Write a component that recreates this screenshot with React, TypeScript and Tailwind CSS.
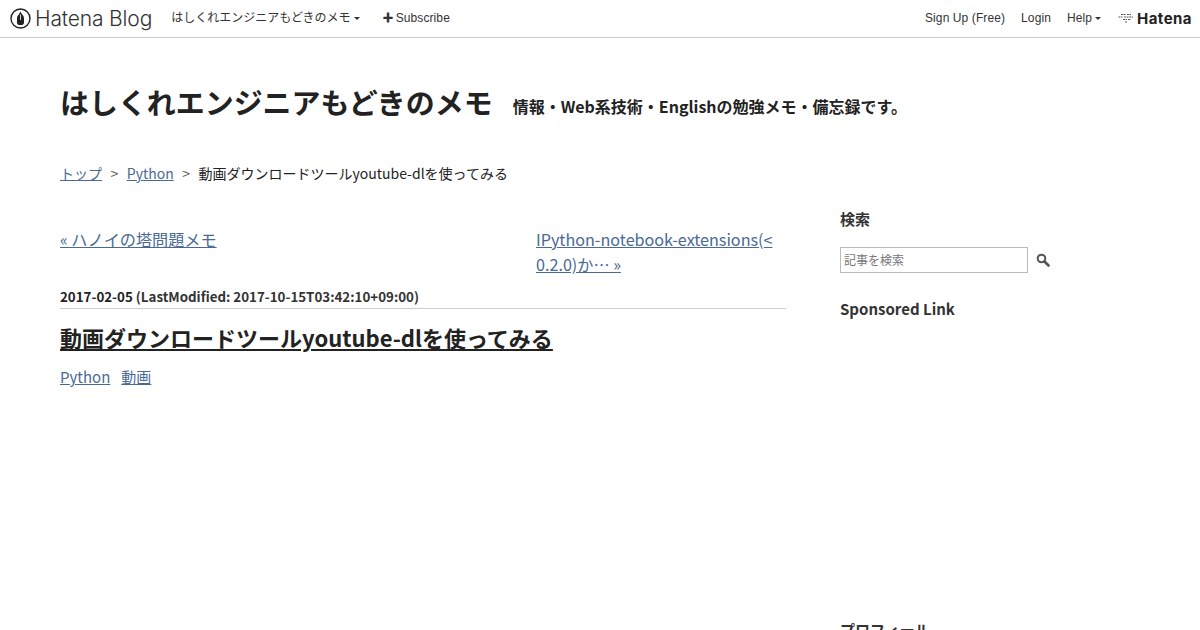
const jp = "font-['Noto_Sans_CJK_JP','Noto_Sans',sans-serif]";

function Caret() {
  return <span className="ml-[3px] inline-block h-0 w-0 border-x-[3px] border-t-[3px] border-x-transparent border-t-[#333] align-middle" />;
}

function BlogLogo() {
  return (
    <div className="flex items-center gap-[4px]">
      <svg width="21" height="21" viewBox="0 0 21 21">
        <circle cx="10.5" cy="10.5" r="9.5" fill="none" stroke="#222" strokeWidth="1.4" />
        <path d="M10.5 3.6 L12.2 6.6 C13.6 8 14 9 14 11 L14 14.4 C14 15.8 13.2 16.8 12 17 L9 17 C7.8 16.8 7 15.8 7 14.4 L7 11 C7 9 7.4 8 8.8 6.6 Z" fill="#222" />
        <path d="M10.5 6.5 V12" stroke="#fff" strokeWidth="0.8" />
      </svg>
      <span className="font-['Inter',sans-serif] text-[21px] leading-none font-light tracking-[-0.15px] text-[#333]">Hatena Blog</span>
    </div>
  );
}

function HatenaLogo() {
  return (
    <div className="flex items-center gap-[3px]">
      <svg width="16" height="12" viewBox="0 0 16 12">
        <path d="M3 2.5h5M9 2.5h4M0.5 5h4M6 5h9M5 7.5h4M10 7.5h3M7 10h2" stroke="#555" strokeWidth="1" fill="none" strokeDasharray="2 0.6" />
      </svg>
      <span className="font-['Inter',sans-serif] text-[15px] leading-none font-bold tracking-[0.45px] text-[#222]">Hatena</span>
    </div>
  );
}

function TopBar() {
  return (
    <div className="flex h-[38px] items-center justify-between border-b border-[#ccc] bg-white pr-[8px] pb-[1px] pl-[10px] font-['Liberation_Sans','Noto_Sans_CJK_JP',sans-serif] text-[12px] tracking-[0.1px] text-[#333]">
      <div className="flex items-center">
        <BlogLogo />
        <div className="ml-[19px] flex items-center tracking-normal">
          はしくれエンジニアもどきのメモ
          <Caret />
        </div>
        <div className="ml-[23px] flex items-center">
          <span className="mr-[2px] text-[11px] leading-none font-bold">✚</span>
          Subscribe
        </div>
      </div>
      <div className="flex items-center">
        <span>Sign Up (Free)</span>
        <span className="ml-[16px]">Login</span>
        <span className="ml-[16px] flex items-center">
          Help
          <Caret />
        </span>
        <div className="ml-[17px]">
          <HatenaLogo />
        </div>
      </div>
    </div>
  );
}

export default function App() {
  const link = "text-[#4a6a94] underline";
  return (
    <div className={`h-[630px] overflow-hidden bg-white text-[#222] ${jp}`}>
      <TopBar />
      <div className="px-[60px]">
        <div className="flex items-baseline pt-[40px]">
          <h1 className="text-[28.95px] leading-[46px] font-bold">はしくれエンジニアもどきのメモ</h1>
          <p className="ml-[20px] -translate-y-px text-[16px] font-semibold">情報・Web系技術・Englishの勉強メモ・備忘録です。</p>
        </div>
        <div className="mt-[37px] flex items-center text-[14px] leading-[24px]">
          <a className={link}>トップ</a>
          <span className="mx-[8.5px] text-[#555]">&gt;</span>
          <a className={link}>Python</a>
          <span className="mx-[8.5px] text-[#555]">&gt;</span>
          <span>動画ダウンロードツールyoutube-dlを使ってみる</span>
        </div>
        <div className="mt-[21px] flex">
          <div className="w-[726px]">
            <div className="mt-[21px] flex justify-between text-[16.15px] leading-[25px]">
              <a className={`${link} h-fit`}>« ハノイの塔問題メモ</a>
              <a className={`${link} w-[250px]`}>
                IPython-notebook-extensions(&lt;
                <br />
                0.2.0)か… »
              </a>
            </div>
            <div className="mt-[9px] border-b border-[#ccc] text-[13.33px] leading-[22px] font-bold">
              2017-02-05 <span className="font-semibold text-[#333]">(LastModified: 2017-10-15T03:42:10+09:00)</span>
            </div>
            <h2 className="mt-[11px] text-[22px] leading-[35px] font-bold underline">
              動画ダウンロードツールyoutube-dlを使ってみる
            </h2>
            <div className="mt-[9px] flex gap-[11px] text-[15px] leading-[25.6px]">
              <a className={link}>Python</a>
              <a className={link}>動画</a>
            </div>
          </div>
          <div className="ml-[54px] w-[260px]">
            <h3 className="text-[15px] leading-[26px] font-bold text-[#333]">検索</h3>
            <div className="mt-[15px] flex items-center">
              <input
                placeholder="記事を検索"
                className="h-[26px] w-[188px] border border-[#bbb] px-[3px] pb-[1px] text-[12px] placeholder:text-[#777]"
              />
              <svg className="ml-[8px]" width="14" height="14" viewBox="0 0 14 14">
                <circle cx="5.5" cy="5.5" r="3.8" fill="none" stroke="#555" strokeWidth="2" />
                <path d="M8.5 8.5 L12.5 12.5" stroke="#555" strokeWidth="2.6" strokeLinecap="round" />
              </svg>
            </div>
            <h3 className="mt-[23px] text-[15px] leading-[26px] font-bold text-[#333]">Sponsored Link</h3>
            <h3 className="mt-[295px] text-[15px] leading-[26px] font-bold text-[#333]">プロフィール</h3>
          </div>
        </div>
      </div>
    </div>
  );
}
